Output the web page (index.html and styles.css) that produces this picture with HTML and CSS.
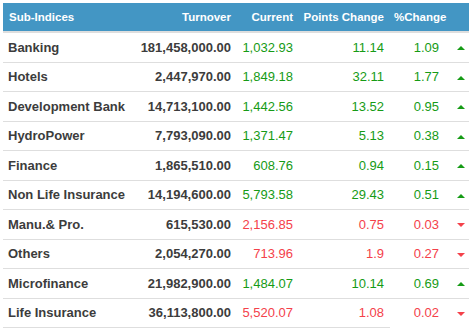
FILE: index.html
```html
<!DOCTYPE html>
<html lang="en">
<head>
  <meta charset="UTF-8">
  <title>Sub-Indices</title>
  <link rel="stylesheet" href="styles.css">
</head>
<body>
  <div class="wrap">
    <table class="indices">
      <colgroup>
        <col class="c-name">
        <col class="c-turn">
        <col class="c-cur">
        <col class="c-pts">
        <col class="c-pct">
        <col class="c-arr">
      </colgroup>
      <thead>
        <tr>
          <th class="left">Sub-Indices</th>
          <th>Turnover</th>
          <th>Current</th>
          <th>Points Change</th>
          <th colspan="2" class="pct-head">%Change</th>
        </tr>
      </thead>
      <tbody>
        <tr class="up">
          <td class="name">Banking</td><td class="turn">181,458,000.00</td>
          <td>1,032.93</td><td>11.14</td><td>1.09</td><td class="arr"><span class="tri"></span></td>
        </tr>
        <tr class="up">
          <td class="name">Hotels</td><td class="turn">2,447,970.00</td>
          <td>1,849.18</td><td>32.11</td><td>1.77</td><td class="arr"><span class="tri"></span></td>
        </tr>
        <tr class="up">
          <td class="name">Development Bank</td><td class="turn">14,713,100.00</td>
          <td>1,442.56</td><td>13.52</td><td>0.95</td><td class="arr"><span class="tri"></span></td>
        </tr>
        <tr class="up">
          <td class="name">HydroPower</td><td class="turn">7,793,090.00</td>
          <td>1,371.47</td><td>5.13</td><td>0.38</td><td class="arr"><span class="tri"></span></td>
        </tr>
        <tr class="up">
          <td class="name">Finance</td><td class="turn">1,865,510.00</td>
          <td>608.76</td><td>0.94</td><td>0.15</td><td class="arr"><span class="tri"></span></td>
        </tr>
        <tr class="up">
          <td class="name">Non Life Insurance</td><td class="turn">14,194,600.00</td>
          <td>5,793.58</td><td>29.43</td><td>0.51</td><td class="arr"><span class="tri"></span></td>
        </tr>
        <tr class="down">
          <td class="name">Manu.&amp; Pro.</td><td class="turn">615,530.00</td>
          <td>2,156.85</td><td>0.75</td><td>0.03</td><td class="arr"><span class="tri"></span></td>
        </tr>
        <tr class="down">
          <td class="name">Others</td><td class="turn">2,054,270.00</td>
          <td>713.96</td><td>1.9</td><td>0.27</td><td class="arr"><span class="tri"></span></td>
        </tr>
        <tr class="up">
          <td class="name">Microfinance</td><td class="turn">21,982,900.00</td>
          <td>1,484.07</td><td>10.14</td><td>0.69</td><td class="arr"><span class="tri"></span></td>
        </tr>
        <tr class="down">
          <td class="name">Life Insurance</td><td class="turn">36,113,800.00</td>
          <td>5,520.07</td><td>1.08</td><td>0.02</td><td class="arr"><span class="tri"></span></td>
        </tr>
      </tbody>
    </table>
    <div class="foot-line"></div>
  </div>
</body>
</html>
```

FILE: styles.css
```css
body {
  margin: 0;
  padding: 0;
  background: #fff;
  font-family: "Liberation Sans", Arial, sans-serif;
}

.wrap {
  padding: 3px 3px 0 3px;
}

.indices {
  width: 466px;
  border-collapse: collapse;
  table-layout: fixed;
}

.c-name { width: 123px; }
.c-turn { width: 110px; }
.c-cur  { width: 62px; }
.c-pts  { width: 91px; }
.c-pct  { width: 55px; }
.c-arr  { width: 25px; }

.indices th {
  background: #4396c4;
  color: #fff;
  font-size: 11.5px;
  font-weight: bold;
  text-align: right;
  height: 28px;
  padding: 0 5px;
  border-bottom: 2px solid #dedede;
  vertical-align: middle;
}

.indices th.left {
  text-align: left;
  padding-left: 6px;
}

.indices th.pct-head {
  padding-right: 23px;
}

.indices td {
  font-size: 13px;
  text-align: right;
  height: 28.5px;
  padding: 0 5px;
  border-top: 1px solid #dedede;
  vertical-align: middle;
  white-space: nowrap;
}

.indices td.name {
  text-align: left;
  font-weight: bold;
  color: #3c3c3c;
}

.indices td.turn {
  font-weight: bold;
  color: #3c3c3c;
}

.up td { color: #169b16; }
.down td { color: #f4414a; }

.indices td.arr {
  text-align: left;
  padding: 0 0 0 13px;
}

.tri {
  display: inline-block;
  width: 0;
  height: 0;
  border-left: 4px solid transparent;
  border-right: 4px solid transparent;
  vertical-align: middle;
}

.up .tri {
  border-bottom: 4px solid #169b16;
}

.down .tri {
  border-top: 4px solid #f4414a;
}

.foot-line {
  width: 387px;
  border-top: 1px solid #dedede;
}
```
